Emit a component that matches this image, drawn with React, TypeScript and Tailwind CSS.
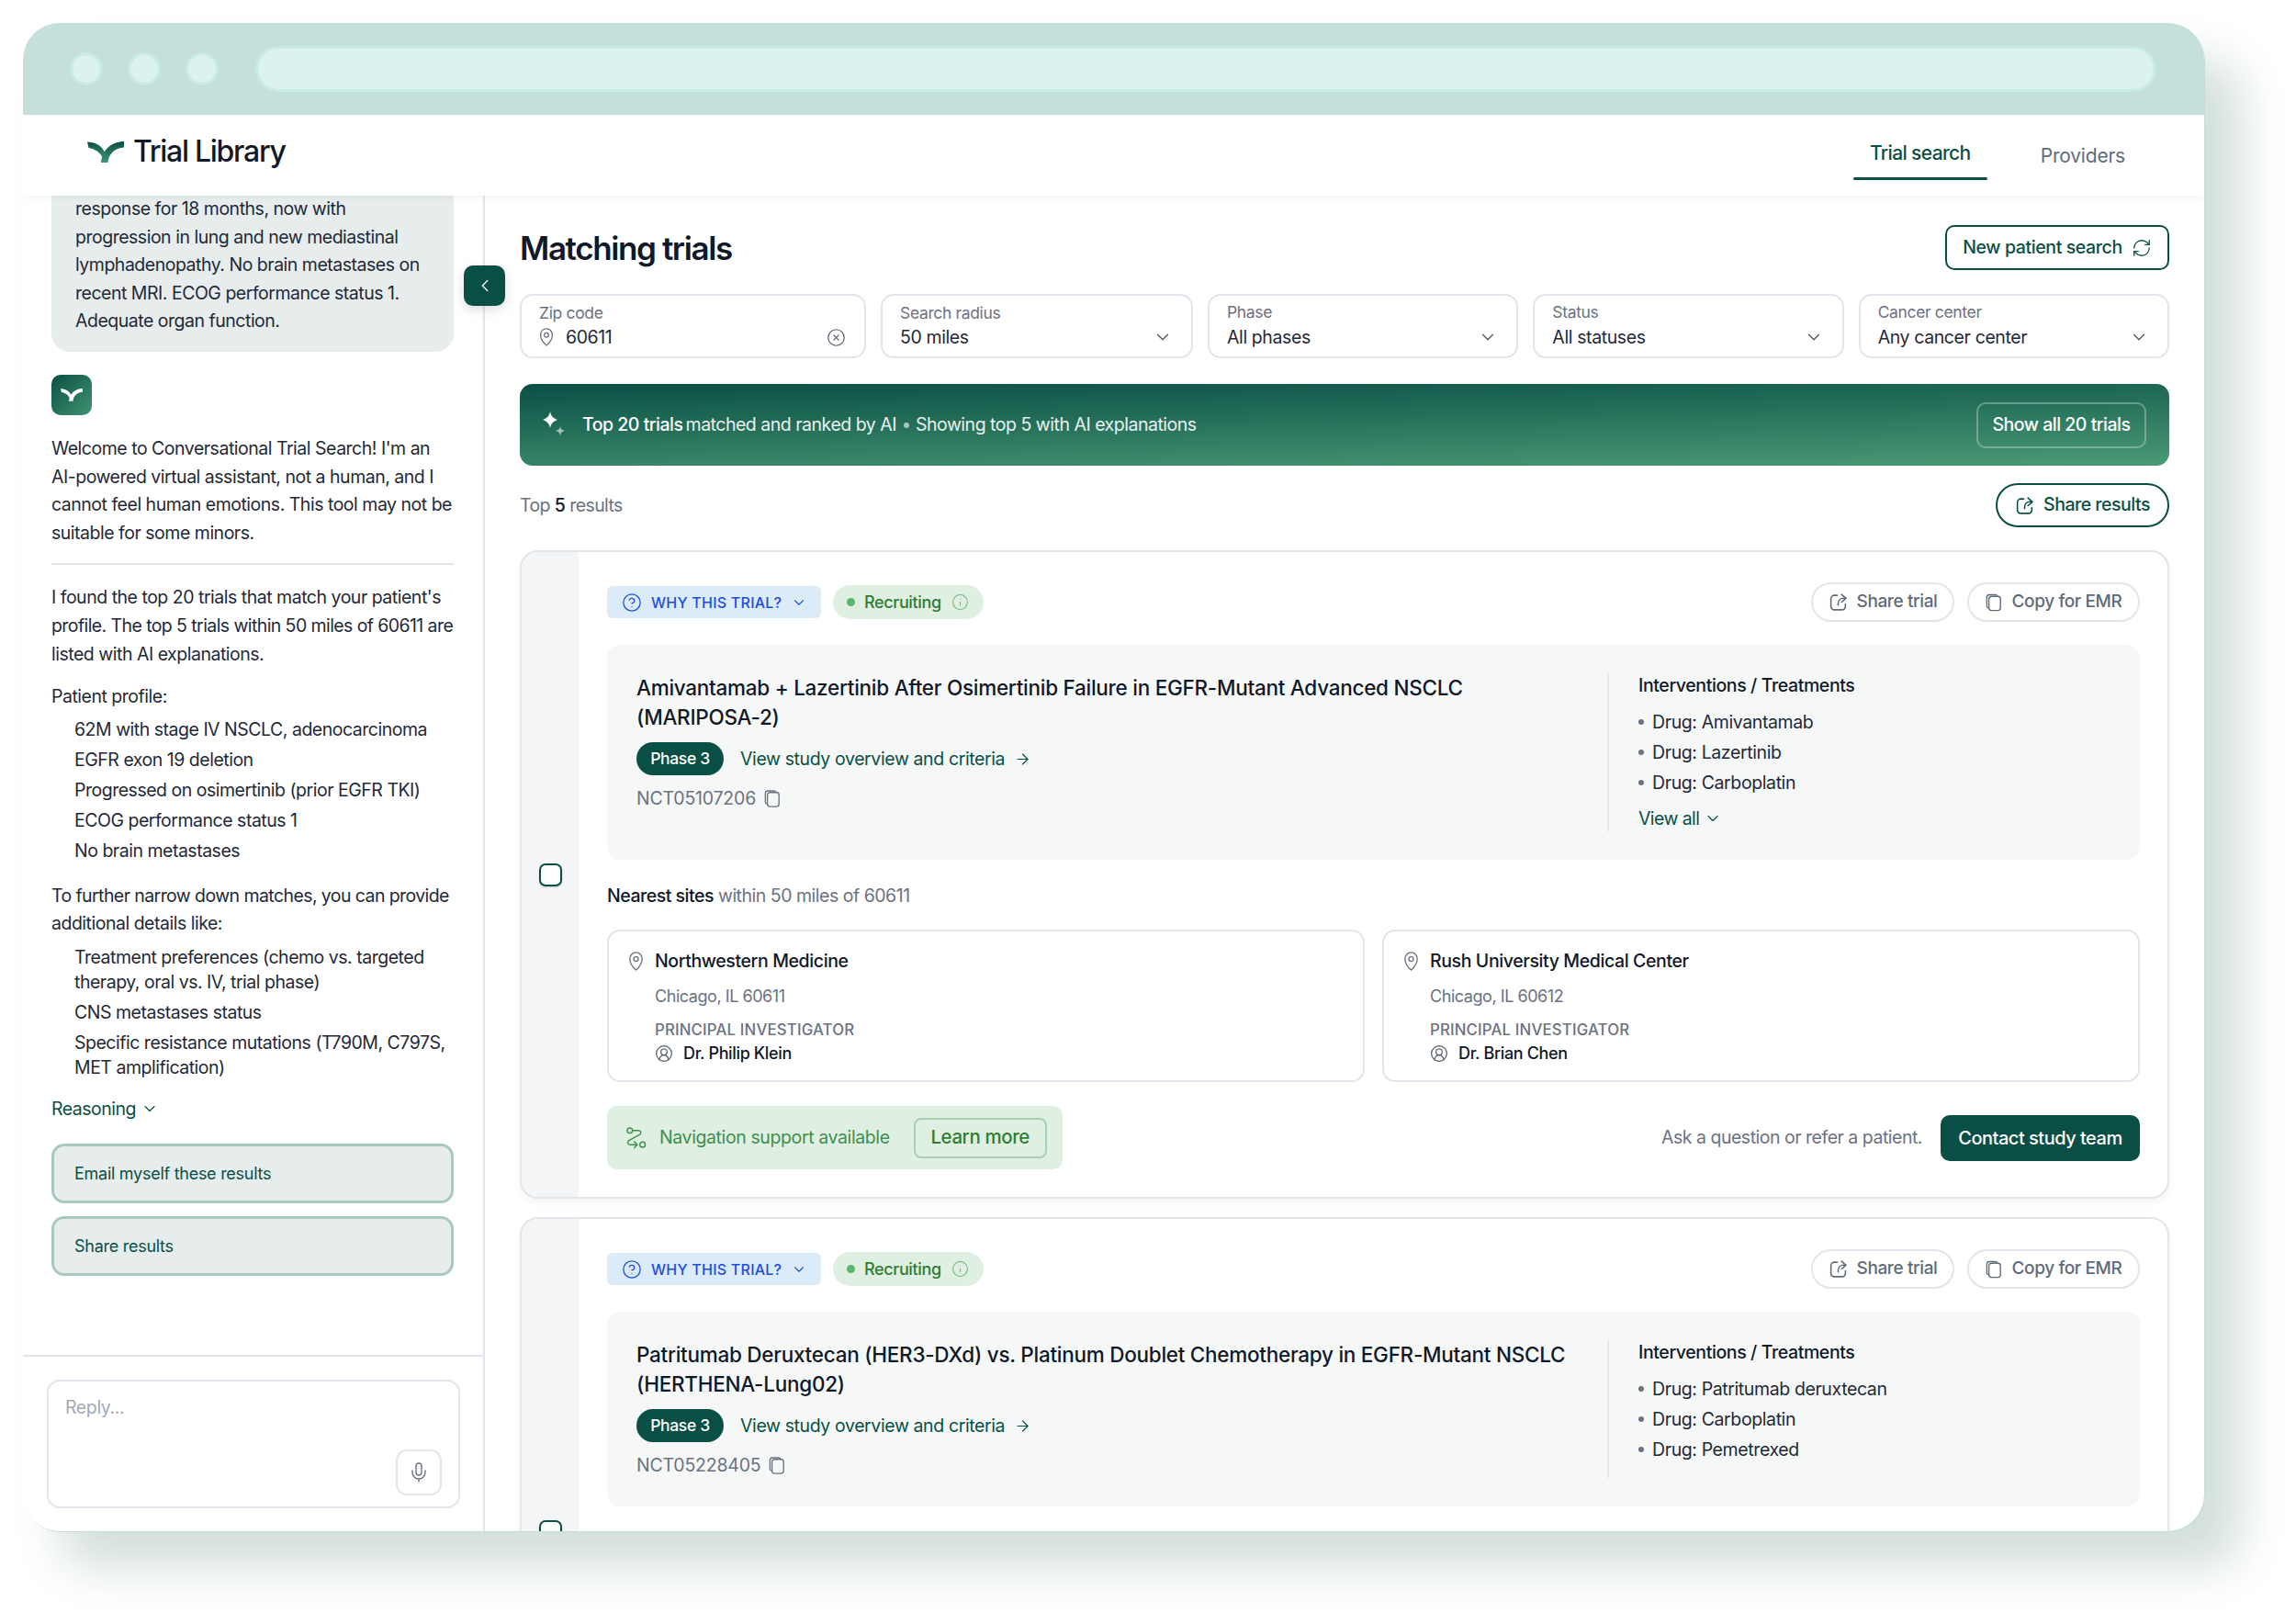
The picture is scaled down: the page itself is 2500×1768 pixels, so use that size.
import { ArrowRight, ChevronDown, ChevronLeft, CircleHelp, CircleUserRound, CircleX, Info, Mic, RefreshCw } from "lucide-react"

const font = { fontFamily: "Inter, sans-serif" }

function Logo({ className }: { className: string }) {
  return (
    <svg viewBox="0 0 40 24" className={className}>
      <defs>
        <linearGradient id="lg" x1="0" y1="0" x2="0" y2="1">
          <stop offset="0" stopColor="#0a4f45" />
          <stop offset="1" stopColor="#3f9570" />
        </linearGradient>
      </defs>
      <path d="M0 1.500C8 1.500 16 5 19.500 14L17 20C15 13 8 9 1.500 8Z" fill="url(#lg)" />
      <path d="M40 1L40 7.500C30 8 23 15 22.500 24L15 24C16 10 27 1 40 1Z" fill="url(#lg)" />
    </svg>
  )
}

function Pin({ className }: { className: string }) {
  return (
    <svg viewBox="0 0 16 22" fill="none" stroke="#6b7280" strokeWidth="1.4" className={className}>
      <path d="M8 1C4 1 1 4 1 8.500C1 13.500 5 18.500 8 21C11 18.500 15 13.500 15 8.500C15 4 12 1 8 1Z" />
      <circle cx="8" cy="8.500" r="2.600" />
    </svg>
  )
}

function ShareIcon({ className }: { className: string }) {
  return (
    <svg viewBox="0 0 20 20" fill="none" stroke="currentColor" strokeWidth="1.5" strokeLinecap="round" strokeLinejoin="round" className={className}>
      <path d="M9 3H6a3.500 3.500 0 0 0-3.500 3.500v8A3.500 3.500 0 0 0 6 18h8a3.500 3.500 0 0 0 3.500-3.500V12" />
      <path d="M13.500 2l4.500 4-4.500 4" />
      <path d="M18 6h-2.500c-3 0-5.500 2-5.500 5.500V13" />
    </svg>
  )
}

function CopyIcon({ className }: { className: string }) {
  return (
    <svg viewBox="0 0 20 22" fill="none" stroke="currentColor" strokeWidth="1.5" className={className}>
      <path d="M3 17.500C2 17 1.500 16 1.500 15V4.500C1.500 2.500 3 1.500 4.500 1.500H11.500C13 1.500 14 2 14.500 3" />
      <rect x="4" y="3.500" width="14" height="17" rx="3" />
    </svg>
  )
}

function Sparkles({ className }: { className: string }) {
  return (
    <svg viewBox="0 0 26 30" className={className}>
      <path d="M9 0C10 5 12 7 17 9C12 11 10 13 9 18C8 13 6 11 1 9C6 7 8 5 9 0Z" fill="white" />
      <path d="M20 16C20.600 19 21.500 20 25 21C21.500 22 20.600 23 20 27C19.400 23 18.500 22 15 21C18.500 20 19.400 19 20 16Z" fill="#9fc4b4" />
    </svg>
  )
}

function RouteIcon({ className }: { className: string }) {
  return (
    <svg viewBox="0 0 24 26" fill="none" stroke="currentColor" strokeWidth="1.5" strokeLinecap="round" strokeLinejoin="round" className={className}>
      <circle cx="5" cy="5" r="3" />
      <circle cx="19.500" cy="21" r="3" />
      <path d="M9 5h6a2.500 2.500 0 0 1 1.700 4.300L4.500 16a2.500 2.500 0 0 0 1.500 5H13" />
      <path d="M10 17.500L13.500 21L10 24.500" />
    </svg>
  )
}

function Field({ label, value, className, up }: { label: string; value: string; className: string; up?: boolean }) {
  return (
    <div className={`h-[70px] rounded-[14px] border-2 border-[#e2e5ec] bg-white pl-[19px] pr-[20px] pt-[7px] ${className}`}>
      <div className={`${up ? "-mt-[1px] mb-[1px]" : ""} text-[17.500px] leading-[24px] tracking-[-0.02em] text-[#6b7280]`}>{label}</div>
      <div className="flex items-center justify-between">
        <span className="text-[19.500px] leading-[28px] tracking-[-0.02em] text-[#1f2937]">{value}</span>
        <ChevronDown className="h-[22px] w-[22px] text-[#4b5563]" strokeWidth={1.4} />
      </div>
    </div>
  )
}

function SiteCard({ name, city, doctor }: { name: string; city: string; doctor: string }) {
  return (
    <div className="h-[166px] flex-1 rounded-[14px] border-2 border-[#e2e5ec] bg-white pl-[21px] pt-[18px]">
      <div className="flex items-center gap-[12px]">
        <Pin className="h-[21px] w-[17px] shrink-0" />
        <span className="text-[19.500px] font-medium leading-[28px] tracking-[-0.02em] text-[#111827]">{name}</span>
      </div>
      <div className="pl-[29px]">
        <div className="mt-[12px] text-[18px] leading-[26px] tracking-[-0.025em] text-[#6b7280]">{city}</div>
        <div className="mt-[12px] text-[16.800px] font-medium leading-[22px] tracking-[0.01em] text-[#6b7280]">PRINCIPAL INVESTIGATOR</div>
        <div className="mt-[2px] flex items-center gap-[11px]">
          <CircleUserRound className="h-[20px] w-[20px] text-[#4b5563]" strokeWidth={1.4} />
          <span className="text-[18px] font-medium leading-[26px] tracking-[-0.02em] text-[#111827]">{doctor}</span>
        </div>
      </div>
    </div>
  )
}

type Trial = { title: string[]; nct: string; drugs: string[]; viewAll: boolean }

function TrialCard({ trial }: { trial: Trial }) {
  return (
    <div className="flex shrink-0 overflow-hidden rounded-[20px] border-2 border-[#e2e5ec] bg-white shadow-[0_4px_10px_rgba(17,24,39,0.05)]">
      <div className="flex w-[62px] shrink-0 items-center justify-center bg-[#f3f5f7]">
        <div className="h-[25px] w-[25px] rounded-[7px] border-2 border-[#0a4f45] bg-white shadow-[0_1px_2px_rgba(0,0,0,0.2)]" />
      </div>
      <div className="flex-1 pb-[30px] pl-[31px] pr-[30px] pt-[33px]">
        <div className="flex items-center justify-between">
          <div className="flex items-center gap-[13px]">
            <div className="flex h-[35px] w-[233px] items-center gap-[10px] rounded-[6px] bg-[#dcebf8] pl-[16px] text-[#1d4ed8]">
              <CircleHelp className="h-[22px] w-[22px]" strokeWidth={1.4} />
              <span className="text-[16px] font-medium tracking-[0.015em]">WHY THIS TRIAL?</span>
              <ChevronDown className="h-[18px] w-[18px]" strokeWidth={1.5} />
            </div>
            <div className="flex h-[37px] w-[164px] items-center rounded-full bg-[#dff0e2] pl-[15px] text-[#2e7d32]">
              <span className="h-[9px] w-[9px] rounded-full bg-[#5cb56a]" />
              <span className="ml-[10px] text-[18px] font-medium tracking-[-0.02em]">Recruiting</span>
              <Info className="ml-[11px] h-[19px] w-[19px] text-[#6fb67c]" strokeWidth={1.3} />
            </div>
          </div>
          <div className="flex items-center gap-[14px] text-[#5f6b7a]">
            <div className="flex h-[43px] w-[156px] items-center justify-center gap-[10px] rounded-full border-2 border-[#e2e5ec]">
              <ShareIcon className="h-[21px] w-[21px]" />
              <span className="text-[19px] font-medium tracking-[-0.02em]">Share trial</span>
            </div>
            <div className="flex h-[43px] w-[188px] items-center justify-center gap-[11px] rounded-full border-2 border-[#e2e5ec]">
              <CopyIcon className="h-[20px] w-[18px]" />
              <span className="text-[19px] font-medium tracking-[-0.02em]">Copy for EMR</span>
            </div>
          </div>
        </div>
        <div className="mt-[25px] flex rounded-[14px] bg-[#f6f8f8] pb-[31px] pl-[32px] pr-[32px] pt-[31px]">
          <div className="flex-1">
            <div className="text-[22.500px] font-medium leading-[32px] tracking-[-0.012em] text-[#111827]">
              {trial.title.map((line) => (
                <div key={line}>{line}</div>
              ))}
            </div>
            <div className="mt-[11px] flex items-center">
              <span className="flex h-[36px] w-[95px] items-center justify-center rounded-full bg-[#0a4f45] text-[17.500px] font-medium tracking-[-0.02em] text-white">Phase 3</span>
              <span className="ml-[18px] text-[19.500px] leading-[28px] tracking-[-0.02em] text-[#0a4f45]">View study overview and criteria</span>
              <ArrowRight className="ml-[10px] h-[19px] w-[19px] text-[#0a4f45]" strokeWidth={1.5} />
            </div>
            <div className="mt-[11px] flex items-center gap-[9px]">
              <span className="text-[19.500px] leading-[28px] tracking-[-0.01em] text-[#6b7280]">{trial.nct}</span>
              <CopyIcon className="h-[21px] w-[18px] text-[#6b7280]" />
            </div>
          </div>
          <div className="w-[548px] border-l-2 border-[#e5e7eb] pl-[32px]">
            <div className="-mt-[1px] text-[19.500px] font-medium leading-[28px] tracking-[-0.02em] text-[#111827]">Interventions / Treatments</div>
            <div className="mt-[12px] flex flex-col gap-[5px]">
              {trial.drugs.map((drug) => (
                <div key={drug} className="flex items-center gap-[9px]">
                  <span className="h-[6px] w-[6px] rounded-full bg-[#6b7280]" />
                  <span className="text-[19.500px] leading-[28px] tracking-[-0.02em] text-[#1f2937]">{drug}</span>
                </div>
              ))}
            </div>
            {trial.viewAll && (
              <div className="mt-[11px] flex items-center gap-[5px] text-[#0a4f45]">
                <span className="text-[19.500px] leading-[28px] tracking-[-0.03em]">View all</span>
                <ChevronDown className="h-[20px] w-[20px]" strokeWidth={1.4} />
              </div>
            )}
          </div>
        </div>
        <div className="mt-[25px] text-[19.500px] leading-[28px] tracking-[-0.025em] text-[#6b7280]">
          <span className="font-medium text-[#111827]">Nearest sites</span> within 50 miles of 60611
        </div>
        <div className="mt-[23px] flex gap-[19px]">
          <SiteCard name="Northwestern Medicine" city="Chicago, IL 60611" doctor="Dr. Philip Klein" />
          <SiteCard name="Rush University Medical Center" city="Chicago, IL 60612" doctor="Dr. Brian Chen" />
        </div>
        <div className="mt-[26px] flex items-center justify-between">
          <div className="flex h-[69px] w-[496px] items-center rounded-[10px] bg-[#dff0e2] pl-[20px]">
            <RouteIcon className="h-[25px] w-[23px] text-[#3f8f4d]" />
            <span className="ml-[14px] text-[19.500px] tracking-[-0.02em] text-[#3f8f4d]">Navigation support available</span>
            <span className="ml-[26px] flex h-[44px] w-[145px] items-center justify-center rounded-[8px] border-2 border-[#a7d0ae] text-[20.500px] font-medium tracking-[-0.02em] text-[#2e7d32]">Learn more</span>
          </div>
          <div className="flex items-center gap-[20px]">
            <span className="text-[19.500px] tracking-[-0.025em] text-[#6b7280]">Ask a question or refer a patient.</span>
            <span className="flex h-[50px] w-[217px] items-center justify-center rounded-[10px] bg-[#0a4f45] text-[20px] font-medium tracking-[-0.025em] text-white">Contact study team</span>
          </div>
        </div>
      </div>
    </div>
  )
}

const trials: Trial[] = [
  {
    title: ["Amivantamab + Lazertinib After Osimertinib Failure in EGFR-Mutant Advanced NSCLC", "(MARIPOSA-2)"],
    nct: "NCT05107206",
    drugs: ["Drug: Amivantamab", "Drug: Lazertinib", "Drug: Carboplatin"],
    viewAll: true,
  },
  {
    title: ["Patritumab Deruxtecan (HER3-DXd) vs. Platinum Doublet Chemotherapy in EGFR-Mutant NSCLC", "(HERTHENA-Lung02)"],
    nct: "NCT05228405",
    drugs: ["Drug: Patritumab deruxtecan", "Drug: Carboplatin", "Drug: Pemetrexed"],
    viewAll: false,
  },
]

export default function App() {
  return (
    <div className="h-[1768px] w-[2500px] bg-white pl-[25px] pt-[25px]" style={font}>
      <div className="flex h-[1642px] w-[2375px] flex-col overflow-hidden rounded-[40px] bg-white shadow-[1px_1px_0_#c8dcd6,40px_40px_50px_rgba(13,79,69,0.18)]">
        <div className="flex h-[100px] shrink-0 items-center gap-[27px] bg-[#c5e0da] pl-[51px] pr-[52px]">
          <span className="h-[36px] w-[36px] rounded-full border-[3px] border-[#c6ebdf] bg-[#dcf2ee]" />
          <span className="h-[36px] w-[36px] rounded-full border-[3px] border-[#c6ebdf] bg-[#dcf2ee]" />
          <span className="h-[36px] w-[36px] rounded-full border-[3px] border-[#c6ebdf] bg-[#dcf2ee]" />
          <span className="ml-[13px] h-[50px] flex-1 rounded-full border-[3px] border-[#c6ebdf] bg-[#dcf2ee]" />
        </div>
        <div className="relative z-10 flex h-[88px] shrink-0 items-start justify-between bg-white pl-[70px] pr-[86px] shadow-[0_2px_6px_rgba(17,24,39,0.05)]">
          <div className="mt-[16px] flex items-center gap-[10px]">
            <Logo className="h-[24px] w-[40px]" />
            <span className="text-[32px] font-medium tracking-[-0.04em] text-[#111827]">Trial Library</span>
          </div>
          <div className="flex items-start gap-[58px]">
            <div className="flex w-[146px] flex-col items-center pt-[26px]">
              <span className="text-[21px] font-medium tracking-[-0.03em] text-[#0a4f45]">Trial search</span>
              <span className="mt-[10px] h-[3px] w-full rounded-full bg-[#0a4f45]" />
            </div>
            <span className="mt-[29px] text-[21px] tracking-[-0.01em] text-[#5f6b7a]">Providers</span>
          </div>
        </div>
        <div className="relative flex min-h-0 flex-1">
          <div className="flex w-[503px] shrink-0 flex-col border-r-2 border-[#e2e5ec]">
            <div className="flex min-h-0 flex-1 flex-col overflow-hidden whitespace-nowrap pl-[31px] pr-[32px] pt-0 text-[19.500px] tracking-[-0.025em] text-[#1f2937]">
              <div className="rounded-b-[20px] bg-[#e7eded] pb-[18px] pl-[26px] pr-[10px] leading-[30.600px]">
                <div className="-mt-[1px]">response for 18 months, now with</div>
                <div>progression in lung and new mediastinal</div>
                <div>lymphadenopathy. No brain metastases on</div>
                <div>recent MRI. ECOG performance status 1.</div>
                <div>Adequate organ function.</div>
              </div>
              <div className="mt-[25px] flex h-[44px] w-[44px] shrink-0 items-center justify-center rounded-[10px] bg-gradient-to-br from-[#0a4f45] to-[#3f9570]">
                <svg viewBox="0 0 40 24" className="h-[15px] w-[24px]">
                  <path d="M0 1.500C8 1.500 16 5 19.500 14L17 20C15 13 8 9 1.500 8Z" fill="white" />
                  <path d="M40 1L40 7.500C30 8 23 15 22.500 24L15 24C16 10 27 1 40 1Z" fill="white" />
                </svg>
              </div>
              <div className="mt-[21px] leading-[30.600px]">
                <div>Welcome to Conversational Trial Search! I'm an</div>
                <div>AI-powered virtual assistant, not a human, and I</div>
                <div>cannot feel human emotions. This tool may not be</div>
                <div>suitable for some minors.</div>
              </div>
              <div className="mt-[18px] h-[2px] shrink-0 bg-[#e2e5ec]" />
              <div className="mt-[20px] leading-[30.600px]">
                <div>I found the top 20 trials that match your patient's</div>
                <div className="tracking-[-0.03em]">profile. The top 5 trials within 50 miles of 60611 are</div>
                <div>listed with AI explanations.</div>
              </div>
              <div className="mt-[16px] leading-[30px]">Patient profile:</div>
              <div className="mt-[5px] pl-[25px] leading-[33px]">
                <div>62M with stage IV NSCLC, adenocarcinoma</div>
                <div>EGFR exon 19 deletion</div>
                <div>Progressed on osimertinib (prior EGFR TKI)</div>
                <div>ECOG performance status 1</div>
                <div>No brain metastases</div>
              </div>
              <div className="mt-[17px] leading-[30px]">
                <div className="tracking-[-0.03em]">To further narrow down matches, you can provide</div>
                <div>additional details like:</div>
              </div>
              <div className="mt-[9px] flex flex-col gap-[6px] pl-[25px] leading-[27px]">
                <div>
                  <div>Treatment preferences (chemo vs. targeted</div>
                  <div>therapy, oral vs. IV, trial phase)</div>
                </div>
                <div>CNS metastases status</div>
                <div>
                  <div>Specific resistance mutations (T790M, C797S,</div>
                  <div>MET amplification)</div>
                </div>
              </div>
              <div className="mt-[17px] flex items-center gap-[5px] text-[#0a4f45]">
                <span className="leading-[28px]">Reasoning</span>
                <ChevronDown className="h-[20px] w-[20px]" strokeWidth={1.4} />
              </div>
              <div className="mt-[24px] flex h-[65px] shrink-0 items-center rounded-[14px] border-[3px] border-[#a9c8c0] bg-[#e7eded] pl-[22px] text-[18px] tracking-[-0.015em] text-[#0a4f45]">Email myself these results</div>
              <div className="mt-[14px] flex h-[65px] shrink-0 items-center rounded-[14px] border-[3px] border-[#a9c8c0] bg-[#e7eded] pl-[22px] text-[18px] tracking-[-0.015em] text-[#0a4f45]">Share results</div>
            </div>
            <div className="h-[192px] shrink-0 border-t-2 border-[#e2e5ec] pl-[26px] pr-[25px] pt-[25px]">
              <div className="relative h-[140px] rounded-[14px] border-2 border-[#e2e5ec] pl-[18px] pt-[14px]">
                <span className="text-[19.500px] tracking-[-0.02em] text-[#a3a9b4]">Reply...</span>
                <div className="absolute bottom-[12px] right-[18px] flex h-[50px] w-[50px] items-center justify-center rounded-[12px] border-2 border-[#e2e5ec]">
                  <Mic className="h-[24px] w-[24px] text-[#6b7280]" strokeWidth={1.4} />
                </div>
              </div>
            </div>
          </div>
          <div className="absolute left-[480px] top-[76px] z-10 flex h-[44px] w-[45px] items-center justify-center rounded-[10px] bg-[#0a4f45] shadow-[0_4px_12px_rgba(17,24,39,0.15)]">
            <ChevronLeft className="h-[22px] w-[22px] text-white" strokeWidth={1.3} />
          </div>
          <div className="flex min-w-0 flex-1 flex-col overflow-hidden pl-[38px] pr-[38px]">
            <div className="mt-[32px] flex h-[49px] shrink-0 items-center justify-between">
              <h1 className="mt-[2px] text-[35px] font-semibold tracking-[-0.04em] text-[#111827]">Matching trials</h1>
              <div className="flex h-[49px] w-[244px] items-center justify-center gap-[10px] rounded-[10px] border-2 border-[#0a4f45] text-[#0a4f45]">
                <span className="text-[19.500px] font-medium tracking-[-0.02em]">New patient search</span>
                <RefreshCw className="h-[22px] w-[22px]" strokeWidth={1.4} />
              </div>
            </div>
            <div className="mt-[26px] flex shrink-0 gap-[16px]">
              <div className="h-[70px] w-[377px] rounded-[14px] border-2 border-[#e2e5ec] bg-white pl-[19px] pr-[20px] pt-[7px]">
                <div className="text-[17.500px] leading-[24px] tracking-[-0.02em] text-[#6b7280]">Zip code</div>
                <div className="flex items-center">
                  <Pin className="h-[20px] w-[16px]" />
                  <span className="ml-[13px] flex-1 text-[19.500px] leading-[28px] tracking-[-0.02em] text-[#1f2937]">60611</span>
                  <CircleX className="h-[21px] w-[21px] text-[#4b5563]" strokeWidth={1.3} />
                </div>
              </div>
              <Field label="Search radius" value="50 miles" className="w-[340px]" />
              <Field label="Phase" value="All phases" className="flex-1" up />
              <Field label="Status" value="All statuses" className="flex-1" up />
              <Field label="Cancer center" value="Any cancer center" className="flex-1" up />
            </div>
            <div className="mt-[28px] flex h-[89px] shrink-0 items-center justify-between rounded-[14px] bg-[linear-gradient(178.8deg,#0a4f45,#4a9a76)] pl-[24px] pr-[25px]">
              <div className="flex items-center text-[19.500px] tracking-[-0.025em] text-white">
                <Sparkles className="h-[30px] w-[26px]" />
                <span className="ml-[18px] font-medium">Top 20 trials</span>
                <span className="ml-[3px] text-white/90">matched and ranked by AI</span>
                <span className="ml-[8px] mr-[7px] h-[6px] w-[6px] rounded-full bg-white/60" />
                <span className="text-white/90">Showing top 5 with AI explanations</span>
              </div>
              <div className="flex h-[50px] w-[185px] items-center justify-center rounded-[10px] border-2 border-white/30 text-[19.500px] font-medium tracking-[-0.025em] text-white">Show all 20 trials</div>
            </div>
            <div className="mt-[19px] flex h-[48px] shrink-0 items-center justify-between">
              <div className="mt-[2px] text-[19.500px] tracking-[-0.03em] text-[#6b7280]">
                Top <span className="font-medium text-[#111827]">5</span> results
              </div>
              <div className="flex h-[48px] w-[189px] items-center justify-center gap-[10px] rounded-full border-2 border-[#0a4f45] text-[#0a4f45]">
                <ShareIcon className="h-[21px] w-[21px]" />
                <span className="text-[19.500px] font-medium tracking-[-0.025em]">Share results</span>
              </div>
            </div>
            <div className="mt-[25px] flex flex-col gap-[20px]">
              {trials.map((trial) => (
                <TrialCard key={trial.nct} trial={trial} />
              ))}
            </div>
          </div>
        </div>
      </div>
    </div>
  )
}
